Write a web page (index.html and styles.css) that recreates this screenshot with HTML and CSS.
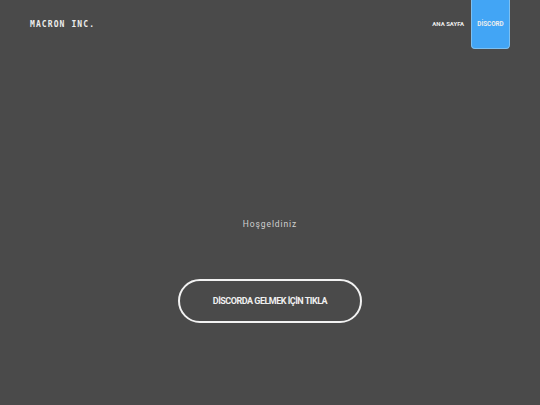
FILE: index.html
```html
<!DOCTYPE html>
<html lang="tr">
<head>
<meta charset="utf-8">
<link rel="stylesheet" href="styles.css">
</head>
<body>
<header class="top">
  <div class="logo">MACRON INC.</div>
  <nav class="nav">
    <a class="nav-link" href="#">ANA SAYFA</a>
    <a class="nav-link active" href="#">DİSCORD</a>
  </nav>
</header>
<main class="hero">
  <p class="welcome">Hoşgeldiniz</p>
  <a class="cta" href="#">DİSCORDA GELMEK İÇİN TIKLA</a>
</main>
</body>
</html>
```
FILE: styles.css
```css
html, body {
  margin: 0;
  padding: 0;
  height: 100%;
}
body {
  background: #4a4a4a;
  font-family: Roboto, "Liberation Sans", sans-serif;
  color: #fff;
  overflow: hidden;
}
.top {
  display: flex;
  justify-content: space-between;
  align-items: flex-start;
  padding: 0 30px 0 30px;
  height: 50px;
}
.logo {
  margin-top: 20px;
  font-family: "DejaVu Sans Mono", monospace;
  font-weight: bold;
  font-size: 8px;
  line-height: 10px;
  letter-spacing: 1.1px;
  color: #ececec;
}
.nav {
  display: flex;
  align-items: flex-start;
  gap: 7px;
}
.nav-link {
  color: #eee;
  text-decoration: none;
  font-weight: bold;
  font-size: 6px;
  line-height: 8px;
}
.nav-link:first-child {
  margin-top: 20px;
}
.active {
  width: 39px;
  height: 49px;
  box-sizing: border-box;
  display: flex;
  align-items: center;
  justify-content: center;
  background: #42a5f5;
  border: 1px solid #7cc0f2;
  border-top: none;
  border-radius: 0 0 4px 4px;
  font-size: 6.3px;
}
.hero {
  display: flex;
  flex-direction: column;
  align-items: center;
}
.welcome {
  margin: 168px 0 0 0;
  font-size: 8.5px;
  letter-spacing: 0.9px;
  color: #d0d0d0;
  line-height: 12px;
}
.cta {
  margin-top: 49px;
  width: 184px;
  height: 44px;
  box-sizing: border-box;
  border: 2px solid #f2f2f2;
  border-radius: 22px;
  display: flex;
  align-items: center;
  justify-content: center;
  color: #f0f0f0;
  text-decoration: none;
  font-weight: bold;
  font-size: 9px;
  letter-spacing: -0.5px;
}
```
